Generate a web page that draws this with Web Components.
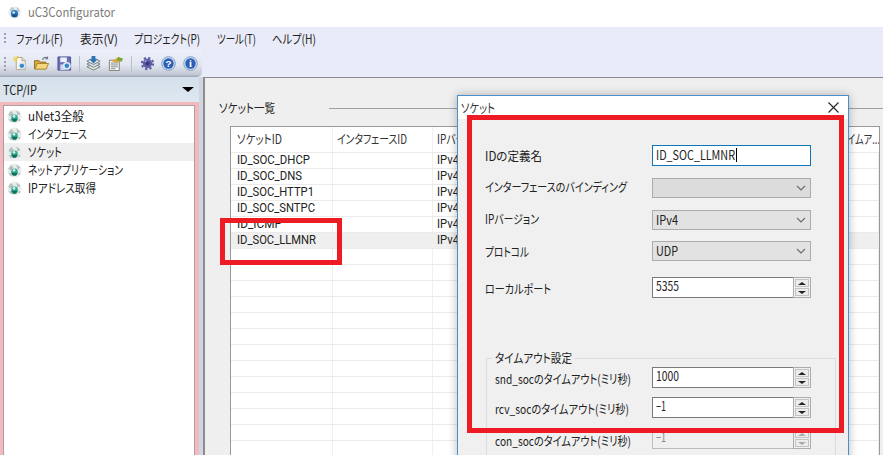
<!DOCTYPE html>
<html lang="ja">
<head>
<meta charset="utf-8">
<title>uC3Configurator</title>
<style>
  html, body { margin: 0; padding: 0; width: 883px; height: 455px; overflow: hidden; background: #fff; }
  body { font: 12.5px/16px "Noto Sans CJK JP", "Liberation Sans", sans-serif; font-feature-settings: "palt"; color: #222; }
</style>
</head>
<body>
<uc-app>
  <uc-titlebar slot="title"><uc-fit w="87">uC3Configurator</uc-fit></uc-titlebar>
  <uc-menubar slot="menu">
    <uc-fit w="47">ファイル(F)</uc-fit><uc-fit w="38">表示(V)</uc-fit><uc-fit w="66">プロジェクト(P)</uc-fit><uc-fit w="39">ツール(T)</uc-fit><uc-fit w="44">ヘルプ(H)</uc-fit>
  </uc-menubar>
  <uc-toolbar slot="toolbar"></uc-toolbar>
  <uc-panel-head slot="head"><uc-fit w="34">TCP/IP</uc-fit></uc-panel-head>
  <uc-tree slot="tree">
    <uc-tree-item><uc-fit w="56">uNet3全般</uc-fit></uc-tree-item>
    <uc-tree-item><uc-fit w="59">インタフェース</uc-fit></uc-tree-item>
    <uc-tree-item selected><uc-fit w="34">ソケット</uc-fit></uc-tree-item>
    <uc-tree-item><uc-fit w="95">ネットアプリケーション</uc-fit></uc-tree-item>
    <uc-tree-item><uc-fit w="68">IPアドレス取得</uc-fit></uc-tree-item>
  </uc-tree>
  <uc-socket-list slot="main"></uc-socket-list>

  <uc-dialog slot="over" heading="ソケット">
    <uc-field label="IDの定義名" lw="57" dy="0" style="margin-top:26px"><uc-text value="ID_SOC_LLMNR"></uc-text></uc-field>
    <uc-field label="インターフェースのバインディング" lw="142" dy="-1" style="margin-top:12px"><uc-combo disabled></uc-combo></uc-field>
    <uc-field label="IPバージョン" lw="54" dy="-1" style="margin-top:12px"><uc-combo value="IPv4"></uc-combo></uc-field>
    <uc-field label="プロトコル" lw="44" dy="1" style="margin-top:11px"><uc-combo value="UDP"></uc-combo></uc-field>
    <uc-field label="ローカルポート" lw="66" dy="1" style="margin-top:16px"><uc-spin value="5355"></uc-spin></uc-field>
    <uc-group legend="タイムアウト設定">
      <uc-field inner label="snd_socのタイムアウト(ミリ秒)" lw="136" dy="1"><uc-spin value="1000"></uc-spin></uc-field>
      <uc-field inner label="rcv_socのタイムアウト(ミリ秒)" lw="134" dy="1" style="margin-top:9px"><uc-spin value="−1"></uc-spin></uc-field>
      <uc-field inner label="con_socのタイムアウト(ミリ秒)" lw="136" dy="2" style="margin-top:10px"><uc-spin value="−1" disabled></uc-spin></uc-field>
    </uc-group>
  </uc-dialog>

  <uc-annotation slot="over" style="left:220px;top:218px;width:122px;height:47px"></uc-annotation>
  <uc-annotation slot="over" style="left:467px;top:115px;width:377px;height:318px"></uc-annotation>
</uc-app>

<script>
// small svg set, drawn on a 16 box
const ICONS = {
  logo: `<circle cx="8" cy="8" r="7.5" fill="#e6ebf0"/><path d="M2 5l3-4 3 3-3 3zM11 1l4 5-4 1z" fill="#bcc8d4"/><circle cx="8" cy="9.5" r="4.5" fill="#2f7fbe"/><path d="M4.5 10h7l-1 3.500h-5z" fill="#1b4f86"/><circle cx="7" cy="8" r="1.5" fill="#cfeaf9"/>`,
  node: `<circle cx="8" cy="8" r="7.5" fill="#e8ecea"/><path d="M1.500 6l3-4 2.500 3-3 3zM10 1.500l4.500 3.500-3.500 2zM1.500 11l3 3.500 1.500-3.500zM11 12l3-2v3z" fill="#b4c0bd"/><circle cx="8" cy="9.500" r="3.600" fill="#35ab94"/><path d="M4.800 10.500h6.400l-1.500 3H6.300z" fill="#11705e"/><circle cx="7.500" cy="7.800" r="1.400" fill="#d6f3ea"/>`,
  file: `<path d="M3.500 1.500h6l3.500 3.500v9.500h-9.500z" fill="#fbf7ea" stroke="#a9a48e"/><path d="M9.500 1.500V5H13" fill="#e8e2c8" stroke="#a9a48e"/><path d="M1 1l1.500 1.500M5 0v2M0 4h2.500M2 6l1-1M4 3l1-1" stroke="#eec83e" stroke-width="1.300"/><circle cx="3.200" cy="3" r="1.600" fill="#f6d95a"/><circle cx="9.500" cy="10.500" r="3.800" fill="#d9e6f2"/><circle cx="9.500" cy="10.500" r="2.300" fill="#2f86c9"/>`,
  folder: `<path d="M.5 13.500V5h5l1 1.500h6v7z" fill="#d8a93d" stroke="#8d6d20"/><path d="M1 14l2.500-6h12l-2.500 6z" fill="#f4d77c" stroke="#a98325"/><path d="M9 4c1-2.500 3-3 5-2.200" fill="none" stroke="#6c7a88" stroke-width="1.200"/><path d="M15 0v3.500h-3.500z" fill="#6c7a88"/>`,
  save: `<path d="M1 1h13.500v14H1z" fill="#6a70b8" stroke="#4a5090"/><path d="M3.500 1.500h7v5h-7z" fill="#eef0fa"/><path d="M3.500 9h5v6h-5z" fill="#cfd3ea"/><circle cx="10.500" cy="10.500" r="4.200" fill="#dfe9f3"/><circle cx="10.500" cy="10.500" r="2.400" fill="#2f86c9"/>`,
  stack: `<path d="M1 11.500l7-3.500 7 3.500-7 3.500z" fill="#e9e5cf" stroke="#6f7f88"/><path d="M1 8.500L8 5l7 3.500L8 12z" fill="#d6e2e8" stroke="#6f7f88"/><path d="M1 5.500L8 2l7 3.500L8 9z" fill="#f1efe2" stroke="#6f7f88"/><path d="M6 0h4v3.500h2.500L8 8 3.500 3.500H6z" fill="#2f72bb"/>`,
  note: `<path d="M1.500 4.500H12v11H1.500z" fill="#f8f7ee" stroke="#7d7f78"/><path d="M3 7.500h7.500M3 9.500h7.500M3 11.500h7.500M3 13.500h5" stroke="#7a8a9a"/><path d="M4 5.500L11 1l5 2-6 4.500z" fill="#d9a93c"/><path d="M11 1l5 2-1.500 3-5-1.500z" fill="#7ca53a"/>`,
  gear: `<circle cx="8" cy="8" r="5" fill="#5f5ca8"/><circle cx="8" cy="8" r="6" fill="none" stroke="#5f5ca8" stroke-width="2.200" stroke-dasharray="2.400 2.312"/><circle cx="8" cy="8" r="2.200" fill="#3a3878"/><circle cx="6" cy="5.500" r="1" fill="#a9a7dc"/>`,
  help: `<circle cx="8" cy="8" r="7.300" fill="#c6d8ee" stroke="#7f9fca"/><circle cx="8" cy="8" r="5.500" fill="#2a5fb4"/><text x="8" y="11.600" text-anchor="middle" font-family="Liberation Sans" font-weight="bold" font-size="10.500" fill="#fff">?</text>`,
  info: `<circle cx="8" cy="8" r="7.300" fill="#c6d8ee" stroke="#7f9fca"/><circle cx="8" cy="8" r="5.500" fill="#2a5fb4"/><text x="8" y="11.800" text-anchor="middle" font-family="Liberation Serif" font-weight="bold" font-size="11" fill="#fff">i</text>`
};
const icon = (name, size = 16) => `<svg width="${size}" height="${size}" viewBox="0 0 16 16" style="display:block;flex:none">${ICONS[name]}</svg>`;

class UcBase extends HTMLElement {
  connectedCallback() {
    if (this.shadowRoot) return;
    this.attachShadow({ mode: 'open' });
    this.shadowRoot.innerHTML = this.render();
  }
}

// Meiryo UI style kana are narrow, so squeeze the text to the width it has on screen
class UcFit extends HTMLElement {
  connectedCallback() {
    if (this.shadowRoot) return;
    this.attachShadow({ mode: 'open' });
    this.shadowRoot.innerHTML = `<style>
      :host { display: inline-block; vertical-align: top; }
      span { display: inline-block; white-space: nowrap; transform-origin: 0 50%; }
    </style><span><slot></slot></span>`;
    const w = parseFloat(this.getAttribute('w'));
    const span = this.shadowRoot.querySelector('span');
    const natural = span.getBoundingClientRect().width;
    this.style.width = w + 'px';
    if (natural) span.style.transform = `scaleX(${w / natural})`;
  }
}

class UcApp extends UcBase {
  render() {
    return `<style>
      :host { display: grid; position: relative; width: 883px; height: 455px; overflow: hidden;
        grid-template-columns: 203px 1fr; grid-template-rows: 27px 23px 27px 25px 1fr; background: #e9ecf8; }
      .t { grid-column: 1 / 3; grid-row: 1; }
      .m { grid-column: 1 / 3; grid-row: 2; }
      .b { grid-column: 1; grid-row: 3; }
      .h { grid-column: 1; grid-row: 4; }
      .n { grid-column: 1; grid-row: 5; display: flex; min-height: 0; background: #cfd6e2; }
      .r { grid-column: 2; grid-row: 3 / 6; display: flex; min-height: 0; padding-top: 27px; }
    </style>
    <div class="t"><slot name="title"></slot></div>
    <div class="m"><slot name="menu"></slot></div>
    <div class="b"><slot name="toolbar"></slot></div>
    <div class="h"><slot name="head"></slot></div>
    <div class="n"><slot name="tree"></slot></div>
    <div class="r"><slot name="main"></slot></div>
    <slot name="over"></slot>`;
  }
}

class UcTitlebar extends UcBase {
  render() {
    return `<style>
      :host { display: flex; align-items: center; gap: 7px; height: 27px; padding: 0 0 3px 8px; box-sizing: border-box;
        background: #fff; color: #7c7c7c; font-size: 13px; }
    </style>${icon('logo', 13)}<slot></slot>`;
  }
}

class UcMenubar extends UcBase {
  render() {
    return `<style>
      :host { display: flex; align-items: center; gap: 16.5px; height: 23px; padding-left: 4px; background: #e9ecf8; color: #222; }
      .grip { width: 2px; height: 11px; margin-right: -6.5px; background: repeating-linear-gradient(#9aa0ad 0 2px, transparent 2px 4px); }
    </style><div class="grip"></div><slot></slot>`;
  }
}

class UcToolbar extends UcBase {
  render() {
    const btn = (n, ml) => `<div style="margin-left:${ml}px">${icon(n, 15)}</div>`;
    return `<style>
      :host { display: flex; align-items: center; width: 202px; height: 27px; box-sizing: border-box; padding-left: 4px;
        border-radius: 0 0 5px 0; background: linear-gradient(#eef1fa 0, #e2e6f0 55%, #c3c9d4 90%, #9ea5b1 100%); }
      .grip { width: 2px; height: 14px; background: repeating-linear-gradient(#9aa0ad 0 2px, transparent 2px 4px); }
      .sep { width: 1px; height: 16px; background: #b9bfcb; margin-left: 7px; }
    </style><div class="grip"></div>
    ${btn('file', 7)}${btn('folder', 6)}${btn('save', 8)}
    <div class="sep"></div>
    ${btn('stack', 6)}${btn('note', 7)}
    <div class="sep" style="margin-left:8px"></div>
    ${btn('gear', 8)}${btn('help', 6)}${btn('info', 7)}`;
  }
}

class UcPanelHead extends UcBase {
  render() {
    return `<style>
      :host { display: flex; align-items: center; justify-content: space-between; height: 25px; width: 199px; box-sizing: border-box;
        padding: 0 5px 0 3px; background: linear-gradient(#d3dfea, #dfe8f1); color: #222; box-shadow: 4px 0 0 #cfd6e2; }
      i { width: 0; height: 0; border: 5px solid transparent; border-top: 5px solid #000; border-bottom: 0; border-left-width: 6px; border-right-width: 6px; }
    </style><slot></slot><i></i>`;
  }
}

class UcTree extends UcBase {
  render() {
    return `<style>
      :host { display: block; width: 199px; box-sizing: border-box; border: solid #f4b9bd; border-width: 3px 4px 0 3px; }
      .in { height: 100%; box-sizing: border-box; background: #fff; border: solid #a8a0a4; border-width: 1px 1px 0 1px; padding-top: 1px; }
    </style><div class="in"><slot></slot></div>`;
  }
}

class UcTreeItem extends UcBase {
  render() {
    return `<style>
      :host { display: flex; align-items: center; gap: 6px; height: 18px; padding-left: 3px; color: #222; }
      :host([selected]) { background: #efefef; }
    </style>${icon('node', 15)}<slot></slot>`;
  }
}

class UcSocketList extends UcBase {
  render() {
    const data = [['ID_SOC_DHCP', 73], ['ID_SOC_DNS', 65], ['ID_SOC_HTTP1', 77], ['ID_SOC_SNTPC', 78], ['ID_ICMP', 45], ['ID_SOC_LLMNR', 79]];
    while (data.length < 19) data.push(['', 0]);
    const rows = data.map(([id, w], i) => `<div class="row${i === 5 ? ' sel' : ''}"><span>${id ? `<uc-fit w="${w}">${id}</uc-fit>` : ''}</span><span></span><span>${id ? '<uc-fit w="22">IPv4</uc-fit>' : ''}</span><span></span></div>`).join('');
    return `<style>
      :host { display: block; flex: 1; min-width: 0; box-sizing: border-box; background: #efefef;
        border: solid #8c8c8c; border-width: 1px 0 0 2px; padding: 22px 0 0 25px; }
      .cap { display: flex; align-items: center; margin-left: -11px; height: 16px; color: #222; }
      .cap i { flex: 1; height: 1px; background: #a0a0a0; margin-left: 54px; }
      .table { margin-top: 10px; width: 650px; height: 340px; overflow: hidden; box-sizing: border-box; background: #fff; border: 1px solid #999; border-bottom: 0; }
      .row, .head { display: grid; grid-template-columns: 102px 100px 400px 1fr; }
      .head { height: 25px; color: #333; }
      .head span { display: flex; align-items: center; box-sizing: border-box; padding-left: 6px; padding-bottom: 2px; border-right: 1px solid #f0f0f0; }
      .head span:nth-child(2), .row span:nth-child(2), .head span:nth-child(3), .row span:nth-child(3) { padding-left: 4px; }
      .row { height: 16px; box-sizing: border-box; border-top: 1px solid #ebebeb; font-family: Roboto, "Liberation Sans", sans-serif; line-height: 14px; color: #222; }
      .row span { box-sizing: border-box; padding-left: 6px; border-right: 1px solid #f0f0f0; }
      .sel { background: #efefef; }
    </style>
    <div class="cap"><uc-fit w="56">ソケット一覧</uc-fit><i></i></div>
    <div class="table">
      <div class="head"><span><uc-fit w="45">ソケットID</uc-fit></span><span><uc-fit w="70">インタフェースID</uc-fit></span><span><uc-fit w="54">IPバージョン</uc-fit></span><span><uc-fit w="41">タイムア...</uc-fit></span></div>
      ${rows}
    </div>`;
  }
}

class UcDialog extends UcBase {
  render() {
    return `<style>
      :host { display: block; position: absolute; left: 457px; top: 95px; width: 392px; height: 400px; box-sizing: border-box;
        border: 1px solid #4a8fc7; background: #f0f0f0; box-shadow: 0 0 9px rgba(0,0,0,.28); }
      .title { display: flex; align-items: center; justify-content: space-between; height: 23px; padding: 0 9px 0 3px; background: #fff; color: #333; }
      svg { display: block; }
    </style>
    <div class="title"><uc-fit w="34">${this.getAttribute('heading')}</uc-fit>
      <svg width="11" height="11" viewBox="0 0 11 11"><path d="M.5.5l10 10M10.500.5l-10 10" stroke="#222" stroke-width="1.100" fill="none"/></svg>
    </div>
    <slot></slot>`;
  }
}

class UcField extends UcBase {
  render() {
    const dy = this.getAttribute('dy') || 0;
    return `<style>
      :host { display: grid; grid-template-columns: 167px 159px; align-items: center; padding-left: 27px; }
      :host([inner]) { grid-template-columns: 157px 159px; padding-left: 8px; }
      .l { position: relative; top: ${dy}px; color: #222; }
    </style><div class="l"><uc-fit w="${this.getAttribute('lw')}">${this.getAttribute('label')}</uc-fit></div><slot></slot>`;
  }
}

class UcText extends UcBase {
  render() {
    return `<style>
      :host { display: flex; align-items: center; height: 21px; box-sizing: border-box; padding: 0 0 2px 3px; background: #fff; border: 1px solid #0f74b8; color: #222; }
      i { width: 1px; height: 14px; background: #000; margin-left: 1px; }
    </style><uc-fit w="79">${this.getAttribute('value')}</uc-fit><i></i>`;
  }
}

class UcCombo extends UcBase {
  render() {
    const v = this.getAttribute('value') || '';
    return `<style>
      :host { display: flex; align-items: center; justify-content: space-between; height: 20px; box-sizing: border-box;
        padding: 0 4px 0 3px; background: #e2e2e2; border: 1px solid #acacac; color: #222; }
      :host([disabled]) { background: #dcdcdc; }
      svg { display: block; }
    </style><span>${v ? `<uc-fit w="22">${v}</uc-fit>` : ''}</span>
    <svg width="10" height="6" viewBox="0 0 10 6"><path d="M1 1l4 4 4-4" fill="none" stroke="#6a6a6a" stroke-width="1.100"/></svg>`;
  }
}

class UcSpin extends UcBase {
  render() {
    const v = this.getAttribute('value');
    return `<style>
      :host { display: flex; height: 21px; box-sizing: border-box; background: #fff; color: #222; border: 1px solid #7a7a7a; border-right: 0; }
      :host([disabled]) { background: #f0f0f0; color: #8a8a8a; border-color: #bdbdbd; }
      .v { flex: 1; padding: 0 0 0 3px; line-height: 16px; }
      .b { width: 18px; margin-top: -1px; margin-bottom: -1px; box-sizing: border-box; display: flex; flex-direction: column; border: 1px solid #adadad; padding: 1px; gap: 1px; background: #f0f0f0; }
      .b div { flex: 1; display: flex; align-items: center; justify-content: center; background: #ececec; border: 1px solid #c4c4c4; }
      .u { width: 0; height: 0; border: 3px solid transparent; border-top: 0; border-bottom: 3px solid #222; border-left-width: 4px; border-right-width: 4px; }
      .d { width: 0; height: 0; border: 3px solid transparent; border-bottom: 0; border-top: 3px solid #222; border-left-width: 4px; border-right-width: 4px; }
      :host([disabled]) .u { border-bottom-color: #aaa; }
      :host([disabled]) .d { border-top-color: #aaa; }
    </style><div class="v"><uc-fit w="${v.length > 2 ? 23 : 10}">${v}</uc-fit></div>
    <div class="b"><div><i class="u"></i></div><div><i class="d"></i></div></div>`;
  }
}

class UcGroup extends UcBase {
  render() {
    return `<style>
      :host { display: block; margin: 52px 12px 0 28px; }
      fieldset { margin: 0; padding: 1px 0 20px 0; border: 1px solid #dcdcdc; }
      legend { margin-left: 5px; padding: 0 3px; line-height: 16px; color: #222; }
    </style><fieldset><legend><uc-fit w="77">${this.getAttribute('legend')}</uc-fit></legend><slot></slot></fieldset>`;
  }
}

// red marks drawn over the screenshot
class UcAnnotation extends UcBase {
  render() {
    return `<style>
      :host { display: block; position: absolute; box-sizing: border-box; border: 5px solid #ed1c24; pointer-events: none; }
    </style>`;
  }
}

const defs = { 'uc-app': UcApp, 'uc-titlebar': UcTitlebar, 'uc-menubar': UcMenubar, 'uc-toolbar': UcToolbar,
  'uc-panel-head': UcPanelHead, 'uc-tree': UcTree, 'uc-tree-item': UcTreeItem, 'uc-socket-list': UcSocketList,
  'uc-dialog': UcDialog, 'uc-field': UcField, 'uc-text': UcText, 'uc-combo': UcCombo, 'uc-spin': UcSpin,
  'uc-group': UcGroup, 'uc-annotation': UcAnnotation, 'uc-fit': UcFit };
// uc-fit goes last: it measures, so the fonts of its parents must already apply
Object.keys(defs).forEach(k => customElements.define(k, defs[k]));
</script>
</body>
</html>
